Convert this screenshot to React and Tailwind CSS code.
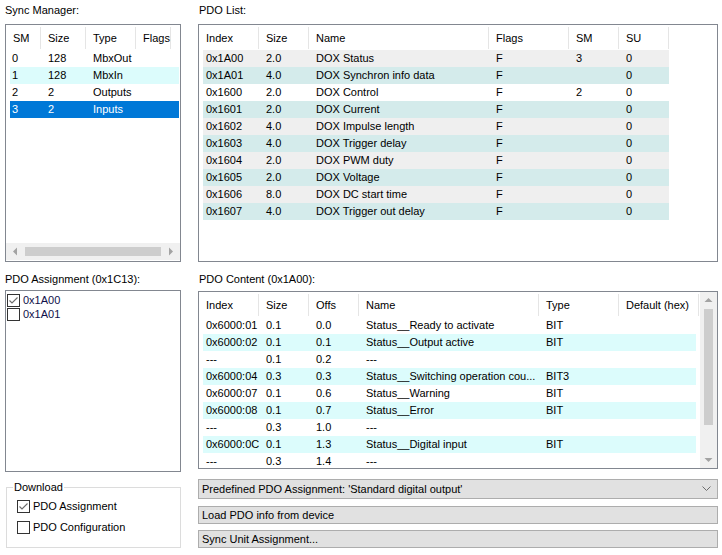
import React from "react";

const FONT = "font-['Liberation_Sans',Arial,sans-serif]";

function Check({ checked }) {
  return (
    <span className="w-[13px] h-[13px] border border-[#333333] bg-white flex items-center justify-center shrink-0">
      {checked && (
        <svg width="11" height="11" viewBox="0 0 11 11">
          <path d="M1.5 5.5 L4 8 L9.5 2.5" fill="none" stroke="#6b6b6b" strokeWidth="1.1" />
        </svg>
      )}
    </span>
  );
}

function HeaderRow({ cols }) {
  return (
    <div className="flex h-[25px] shrink-0">
      {cols.map((c, i) => (
        <div
          key={i}
          style={{ width: c.w }}
          className="mt-[2px] h-[22px] flex items-center pl-[7px] border-r border-[#e5e5e5] whitespace-nowrap shrink-0"
        >
          {c.t}
        </div>
      ))}
    </div>
  );
}

function DataRow({ widths, cells, bg, fg }) {
  return (
    <div className="flex h-[17px] leading-[17px] ml-[4px] w-max" style={{ background: bg, color: fg }}>
      {cells.map((c, i) => (
        <div
          key={i}
          style={{ width: widths[i] }}
          className={(i === 0 ? "pl-[3px] " : "pl-[7px] ") + "overflow-hidden whitespace-nowrap shrink-0"}
        >
          {c}
        </div>
      ))}
    </div>
  );
}

const syncCols = [
  { t: "SM", w: 35 },
  { t: "Size", w: 45 },
  { t: "Type", w: 50 },
  { t: "Flags", w: 35 },
];
const syncRows = [
  ["0", "128", "MbxOut", ""],
  ["1", "128", "MbxIn", ""],
  ["2", "2", "Outputs", ""],
  ["3", "2", "Inputs", ""],
];

const listCols = [
  { t: "Index", w: 60 },
  { t: "Size", w: 50 },
  { t: "Name", w: 180 },
  { t: "Flags", w: 80 },
  { t: "SM", w: 50 },
  { t: "SU", w: 50 },
];
const listRows = [
  ["0x1A00", "2.0", "DOX Status", "F", "3", "0"],
  ["0x1A01", "4.0", "DOX Synchron info data", "F", "", "0"],
  ["0x1600", "2.0", "DOX Control", "F", "2", "0"],
  ["0x1601", "2.0", "DOX Current", "F", "", "0"],
  ["0x1602", "4.0", "DOX Impulse length", "F", "", "0"],
  ["0x1603", "4.0", "DOX Trigger delay", "F", "", "0"],
  ["0x1604", "2.0", "DOX PWM duty", "F", "", "0"],
  ["0x1605", "2.0", "DOX Voltage", "F", "", "0"],
  ["0x1606", "8.0", "DOX DC start time", "F", "", "0"],
  ["0x1607", "4.0", "DOX Trigger out delay", "F", "", "0"],
];
const listBg = ["#efefef", "#d4ebeb", "#ffffff", "#d4ebeb", "#efefef", "#d4ebeb", "#efefef", "#d4ebeb", "#efefef", "#d4ebeb"];

const contCols = [
  { t: "Index", w: 60 },
  { t: "Size", w: 50 },
  { t: "Offs", w: 50 },
  { t: "Name", w: 180 },
  { t: "Type", w: 80 },
  { t: "Default (hex)", w: 80 },
];
const contRows = [
  ["0x6000:01", "0.1", "0.0", "Status__Ready to activate", "BIT", ""],
  ["0x6000:02", "0.1", "0.1", "Status__Output active", "BIT", ""],
  ["---", "0.1", "0.2", "---", "", ""],
  ["0x6000:04", "0.3", "0.3", "Status__Switching operation cou...", "BIT3", ""],
  ["0x6000:07", "0.1", "0.6", "Status__Warning", "BIT", ""],
  ["0x6000:08", "0.1", "0.7", "Status__Error", "BIT", ""],
  ["---", "0.3", "1.0", "---", "", ""],
  ["0x6000:0C", "0.1", "1.3", "Status__Digital input", "BIT", ""],
  ["---", "0.3", "1.4", "---", "", ""],
];

export default function App() {
  return (
    <div className={"w-[722px] h-[555px] bg-white text-black text-[11px] flex overflow-hidden " + FONT}>
      {/* Left column */}
      <div className="ml-[5px] w-[176px] flex flex-col shrink-0">
        <div className="h-[24px] pt-[3px] leading-[14px]">Sync Manager:</div>
        <div className="h-[238px] border border-[#828790] flex flex-col overflow-hidden">
          <HeaderRow cols={syncCols} />
          <div className="flex-1">
            {syncRows.map((r, i) => (
              <div
                key={i}
                className={
                  "flex h-[17px] leading-[17px] ml-[4px] mr-[1px] " +
                  (i === 3 ? "bg-[#0078d7] text-white" : i === 1 ? "bg-[#dcfcfc]" : "")
                }
              >
                <div className="w-[31px] pl-[2px] shrink-0">{r[0]}</div>
                <div className="w-[45px] pl-[7px] shrink-0">{r[1]}</div>
                <div className="w-[50px] pl-[7px] shrink-0">{r[2]}</div>
                <div className="pl-[7px]">{r[3]}</div>
              </div>
            ))}
          </div>
          <div className="h-[17px] mb-[1px] bg-[#f0f0f0] flex items-center shrink-0">
            <svg width="18" height="17" viewBox="0 0 18 17" className="shrink-0">
              <path d="M11 4.5 L7 8.5 L11 12.5 Z" fill="#a3a3a3" />
            </svg>
            <div className="flex-1 h-[9px] bg-[#cdcdcd] mx-[1px]" />
            <svg width="18" height="17" viewBox="0 0 18 17" className="shrink-0">
              <path d="M7 4.5 L11 8.5 L7 12.5 Z" fill="#a3a3a3" />
            </svg>
          </div>
        </div>
        <div className="h-[28px] pt-[10px] leading-[14px]">PDO Assignment (0x1C13):</div>
        <div className="h-[182px] border border-[#828790] pt-[2px] pl-[1px]">
          {[
            ["0x1A00", true],
            ["0x1A01", false],
          ].map(([t, c]) => (
            <div key={t} className="flex items-center h-[14px] gap-[3px]">
              <Check checked={c} />
              <span className="text-[#10104a]">{t}</span>
            </div>
          ))}
        </div>
        <fieldset className="mt-[9px] h-[67px] border border-[#dcdcdc] ml-[1px]">
          <legend className="ml-[6px] px-[1px] leading-[13px]">Download</legend>
          <div className="pl-[10px]">
            <div className="flex items-center gap-[3px] mt-[5px] h-[15px]">
              <Check checked />
              <span>PDO Assignment</span>
            </div>
            <div className="flex items-center gap-[3px] mt-[6px] h-[15px]">
              <Check />
              <span>PDO Configuration</span>
            </div>
          </div>
        </fieldset>
      </div>

      {/* Right column */}
      <div className="ml-[17px] w-[520px] flex flex-col shrink-0">
        <div className="h-[24px] pt-[3px] leading-[14px] pl-[1px]">PDO List:</div>
        <div className="h-[238px] border border-[#828790] flex flex-col overflow-hidden">
          <HeaderRow cols={listCols} />
          <div>
            {listRows.map((r, i) => (
              <DataRow key={i} widths={[56, 50, 180, 80, 50, 50]} cells={r} bg={listBg[i]} />
            ))}
          </div>
        </div>
        <div className="h-[29px] pt-[10px] leading-[14px] pl-[1px]">PDO Content (0x1A00):</div>
        <div className="h-[178px] border border-[#828790] flex overflow-hidden">
          <div className="flex-1 flex flex-col">
            <HeaderRow cols={contCols} />
            <div>
              {contRows.map((r, i) => (
                <DataRow
                  key={i}
                  widths={[56, 50, 50, 180, 80, 77]}
                  cells={r}
                  bg={i % 2 === 1 ? "#dcfcfc" : "#ffffff"}
                />
              ))}
            </div>
          </div>
          <div className="w-[17px] bg-[#f0f0f0] flex flex-col items-center shrink-0">
            <svg width="17" height="17" viewBox="0 0 17 17" className="shrink-0">
              <path d="M4.5 10 L8.5 6 L12.5 10 Z" fill="#a3a3a3" />
            </svg>
            <div className="w-[9px] h-[116px] bg-[#cdcdcd]" />
            <div className="flex-1" />
            <svg width="17" height="17" viewBox="0 0 17 17" className="shrink-0">
              <path d="M4.5 7 L8.5 11 L12.5 7 Z" fill="#a3a3a3" />
            </svg>
          </div>
        </div>
        <div className="mt-[10px] h-[20px] bg-[#e1e1e1] border border-[#adadad] flex items-center pl-[3px] pr-[6px]">
          <span className="flex-1">Predefined PDO Assignment: 'Standard digital output'</span>
          <svg width="9" height="6" viewBox="0 0 9 6">
            <path d="M0.5 0.5 L4.5 4.5 L8.5 0.5" fill="none" stroke="#6d6d6d" strokeWidth="1" />
          </svg>
        </div>
        <div className="mt-[7px] h-[18px] bg-[#e1e1e1] border border-[#adadad] flex items-center pl-[3px]">
          Load PDO info from device
        </div>
        <div className="mt-[6px] h-[18px] bg-[#e1e1e1] border border-[#adadad] flex items-center pl-[3px]">
          Sync Unit Assignment...
        </div>
      </div>
    </div>
  );
}
